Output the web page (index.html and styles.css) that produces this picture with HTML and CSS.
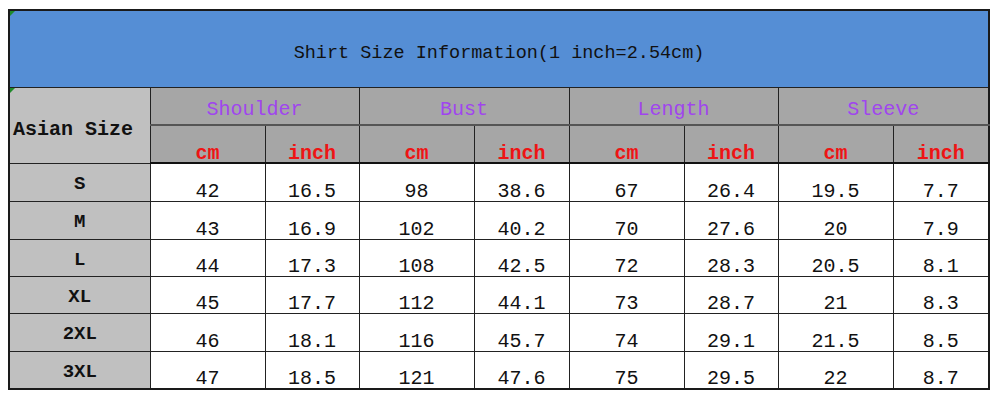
FILE: index.html
```html
<!DOCTYPE html>
<html>
<head>
<meta charset="utf-8">
<link rel="stylesheet" href="styles.css">
</head>
<body>
<table class="size-table">
  <colgroup>
    <col class="c-size">
    <col class="c-cm"><col class="c-in">
    <col class="c-cm"><col class="c-in2">
    <col class="c-cm"><col class="c-in">
    <col class="c-cm"><col class="c-last">
  </colgroup>
  <tr class="r-title">
    <td class="title marked" colspan="9">Shirt Size Information(1 inch=2.54cm)</td>
  </tr>
  <tr class="r-h1">
    <td class="asian marked" rowspan="2">Asian Size</td>
    <td class="measure" colspan="2">Shoulder</td>
    <td class="measure" colspan="2">Bust</td>
    <td class="measure" colspan="2">Length</td>
    <td class="measure" colspan="2">Sleeve</td>
  </tr>
  <tr class="r-h2">
    <td class="unit">cm</td><td class="unit">inch</td>
    <td class="unit">cm</td><td class="unit">inch</td>
    <td class="unit">cm</td><td class="unit">inch</td>
    <td class="unit">cm</td><td class="unit">inch</td>
  </tr>
  <tr class="r-data r-tall">
    <td class="size">S</td>
    <td>42</td><td>16.5</td><td>98</td><td>38.6</td><td>67</td><td>26.4</td><td>19.5</td><td>7.7</td>
  </tr>
  <tr class="r-data r-tall">
    <td class="size">M</td>
    <td>43</td><td>16.9</td><td>102</td><td>40.2</td><td>70</td><td>27.6</td><td>20</td><td>7.9</td>
  </tr>
  <tr class="r-data r-short">
    <td class="size">L</td>
    <td>44</td><td>17.3</td><td>108</td><td>42.5</td><td>72</td><td>28.3</td><td>20.5</td><td>8.1</td>
  </tr>
  <tr class="r-data r-short">
    <td class="size">XL</td>
    <td>45</td><td>17.7</td><td>112</td><td>44.1</td><td>73</td><td>28.7</td><td>21</td><td>8.3</td>
  </tr>
  <tr class="r-data r-tall">
    <td class="size">2XL</td>
    <td>46</td><td>18.1</td><td>116</td><td>45.7</td><td>74</td><td>29.1</td><td>21.5</td><td>8.5</td>
  </tr>
  <tr class="r-data r-tall">
    <td class="size">3XL</td>
    <td>47</td><td>18.5</td><td>121</td><td>47.6</td><td>75</td><td>29.5</td><td>22</td><td>8.7</td>
  </tr>
</table>
</body>
</html>
```
FILE: styles.css
```css
html, body {
  margin: 0;
  padding: 0;
  background: #ffffff;
}

body {
  padding: 9px 0 0 8px;
  font-family: "Liberation Mono", "DejaVu Sans Mono", monospace;
}

.size-table {
  border-collapse: collapse;
  table-layout: fixed;
  width: 980px;
  border: 2px solid #1a1a1a;
}

.c-size { width: 141px; }
.c-cm { width: 115px; }
.c-in { width: 94px; }
.c-in2 { width: 95px; }
.c-last { width: 96px; }

.size-table td {
  padding: 0;
  text-align: center;
  color: #111111;
  border: 1px solid #222222;
  white-space: nowrap;
  overflow: visible;
}

.r-title { height: 77px; }
.r-h1 { height: 38px; }
.r-h2 { height: 38px; }
.r-tall { height: 38px; }
.r-short { height: 37px; }

.title {
  background: #558ed5;
  color: #1b2b45;
  font-size: 18.5px;
  vertical-align: middle;
  padding-top: 9px !important;
  border-bottom: 1px solid #333333;
}

.marked {
  position: relative;
}

.marked::before {
  content: "";
  position: absolute;
  left: 0;
  top: 0;
  border-top: 5px solid #1f8a2a;
  border-right: 5px solid transparent;
}

.asian {
  background: #c0c0c0;
  color: #ee1414;
  font-weight: bold;
  font-size: 20px;
  text-align: left !important;
  padding-left: 3px !important;
  padding-top: 9px !important;
  vertical-align: middle;
}

.measure {
  background: #a6a6a6;
  color: #a045ee !important;
  font-size: 20px;
  vertical-align: middle;
  padding-top: 7px !important;
  border-bottom: 2px solid #555555 !important;
}

.unit {
  background: #a6a6a6;
  color: #ee1414 !important;
  font-weight: bold;
  font-size: 20px;
  line-height: 16px;
  vertical-align: bottom;
  padding-bottom: 0 !important;
  border-bottom: 2px solid #111111 !important;
}

.r-data td {
  background: #ffffff;
  font-size: 20px;
  line-height: 18px;
  vertical-align: bottom;
  padding-bottom: 0;
}

.r-data td.size {
  background: #c0c0c0;
  font-weight: bold;
  font-size: 19px;
  vertical-align: middle;
  padding-bottom: 0;
  padding-top: 4px;
}
```
